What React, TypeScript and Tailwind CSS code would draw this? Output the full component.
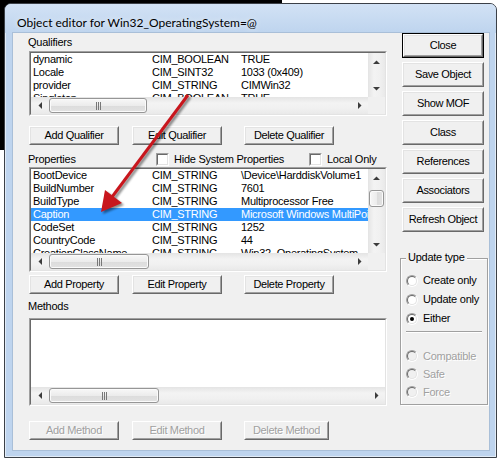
import React from 'react';

type Row = [string, string, string];

const qualifiers: Row[] = [
  ['dynamic', 'CIM_BOOLEAN', 'TRUE'],
  ['Locale', 'CIM_SINT32', '1033 (0x409)'],
  ['provider', 'CIM_STRING', 'CIMWin32'],
  ['Singleton', 'CIM_BOOLEAN', 'TRUE'],
];

const properties: Row[] = [
  ['BootDevice', 'CIM_STRING', '\\Device\\HarddiskVolume1'],
  ['BuildNumber', 'CIM_STRING', '7601'],
  ['BuildType', 'CIM_STRING', 'Multiprocessor Free'],
  ['Caption', 'CIM_STRING', 'Microsoft Windows MultiPoint Server 2011'],
  ['CodeSet', 'CIM_STRING', '1252'],
  ['CountryCode', 'CIM_STRING', '44'],
  ['CreationClassName', 'CIM_STRING', 'Win32_OperatingSystem'],
];

const Glyph = ({ dir }: { dir: 'left' | 'right' | 'up' | 'down' }) => {
  const pts = {
    left: '4,0 4,7 0.5,3.5',
    right: '0,0 0,7 3.5,3.5',
    up: '0,4 7,4 3.5,0.5',
    down: '0,0 7,0 3.5,3.5',
  }[dir];
  const vertical = dir === 'up' || dir === 'down';
  return (
    <svg width={vertical ? 7 : 4} height={vertical ? 4 : 7}>
      <polygon points={pts} fill="#3c3c3c" />
    </svg>
  );
};

const Grip = () => (
  <svg width="7" height="8">
    {[0, 2, 4].map((x) => (
      <rect key={x} x={x + 1} y="0" width="1" height="8" fill="#777" />
    ))}
  </svg>
);

const HScroll = ({ thumb }: { thumb: string }) => (
  <div className="flex h-[17px] flex-1 items-center bg-[linear-gradient(to_bottom,#e4e4e4,#f3f3f3_35%,#f0f0f0_70%,#e9e9e9)]">
    <div className="flex h-[17px] w-[17px] shrink-0 items-center justify-center">
      <Glyph dir="left" />
    </div>
    <div className="flex h-[17px] flex-1 items-center">
      <div
        className={`ml-[1px] flex h-[15px] items-center justify-center rounded-[3px] border border-[#969696] bg-[linear-gradient(to_bottom,#f7f7f7,#ececec_50%,#dcdcdc_51%,#e2e2e2)] shadow-[inset_0_0_0_1px_#fbfbfb] ${thumb}`}
      >
        <Grip />
      </div>
    </div>
    <div className="flex h-[17px] w-[17px] shrink-0 items-center justify-center">
      <Glyph dir="right" />
    </div>
  </div>
);

const VScroll = ({ withThumb }: { withThumb?: boolean }) => (
  <div className="flex w-[17px] shrink-0 flex-col items-center bg-[linear-gradient(to_right,#e4e4e4,#f3f3f3_35%,#f0f0f0_70%,#e9e9e9)]">
    <div className="flex h-[17px] w-[17px] shrink-0 items-center justify-center">
      <Glyph dir="up" />
    </div>
    <div className="flex flex-1 flex-col items-center">
      {withThumb && (
        <div className="mt-[4px] h-[17px] w-[15px] rounded-[3px] border border-[#969696] bg-[linear-gradient(to_right,#f7f7f7,#ececec_50%,#dcdcdc_51%,#e2e2e2)] shadow-[inset_0_0_0_1px_#fbfbfb]" />
      )}
    </div>
    <div className="flex h-[17px] w-[17px] shrink-0 items-center justify-center">
      <Glyph dir="down" />
    </div>
  </div>
);

const Rows = ({ rows, selected }: { rows: Row[]; selected?: number }) => (
  <div className="flex-1 overflow-hidden bg-white">
    {rows.map((r, i) => (
      <div
        key={r[0]}
        className={
          i === selected
            ? 'flex h-[13px] whitespace-nowrap bg-[#3399ff] text-white'
            : 'flex h-[13px] whitespace-nowrap text-black'
        }
      >
        <span className="w-[121px] shrink-0 pl-[2px]">{r[0]}</span>
        <span className="w-[89px] shrink-0">{r[1]}</span>
        <span>{r[2]}</span>
      </div>
    ))}
  </div>
);

const Sunken = ({ className, children }: { className: string; children: React.ReactNode }) => (
  <div className={`border border-t-[#a0a0a0] border-l-[#a0a0a0] border-r-white border-b-white ${className}`}>
    <div className="flex h-full w-full flex-col border border-t-[#696969] border-l-[#696969] border-r-[#e3e3e3] border-b-[#e3e3e3] bg-white">
      {children}
    </div>
  </div>
);

const Button = ({
  label,
  className,
  def,
  disabled,
}: {
  label: string;
  className: string;
  def?: boolean;
  disabled?: boolean;
}) => (
  <div className={`shrink-0 bg-[#f0f0f0] ${def ? 'border border-black' : ''} ${className}`}>
    <div className="flex h-full w-full border border-t-white border-l-white border-r-[#696969] border-b-[#696969]">
      <div
        className={
          disabled
            ? 'flex h-full w-full items-center justify-center whitespace-nowrap border border-t-[#f0f0f0] border-l-[#f0f0f0] border-r-[#a0a0a0] border-b-[#a0a0a0] tracking-[-0.35px] text-[#a0a0a0] [text-shadow:1px_1px_0_#fff]'
            : 'flex h-full w-full items-center justify-center whitespace-nowrap border border-t-[#e3e3e3] border-l-[#e3e3e3] border-r-[#a0a0a0] border-b-[#a0a0a0] tracking-[-0.35px] text-black'
        }
      >
        {label}
      </div>
    </div>
  </div>
);

const Checkbox = () => (
  <span className="inline-flex h-[13px] w-[13px] border border-t-[#a0a0a0] border-l-[#a0a0a0] border-r-white border-b-white">
    <span className="h-full w-full border border-t-[#696969] border-l-[#696969] border-r-[#e3e3e3] border-b-[#e3e3e3] bg-white" />
  </span>
);

const Radio = ({
  label,
  checked,
  disabled,
  className,
}: {
  label: string;
  checked?: boolean;
  disabled?: boolean;
  className: string;
}) => (
  <div className={`flex items-center ${className}`}>
    <span className="flex h-[12px] w-[12px] items-center justify-center rounded-full border border-t-[#a0a0a0] border-l-[#a0a0a0] border-r-white border-b-white">
      <span
        className={
          disabled
            ? 'flex h-[10px] w-[10px] items-center justify-center rounded-full border border-t-[#696969] border-l-[#696969] border-r-[#e3e3e3] border-b-[#e3e3e3] bg-[#f0f0f0]'
            : 'flex h-[10px] w-[10px] items-center justify-center rounded-full border border-t-[#696969] border-l-[#696969] border-r-[#e3e3e3] border-b-[#e3e3e3] bg-white'
        }
      >
        {checked && <span className="h-[4px] w-[4px] rounded-full bg-black" />}
      </span>
    </span>
    <span className={disabled ? 'ml-[5px] text-[#a0a0a0] [text-shadow:1px_1px_0_#fff]' : 'ml-[5px] text-black'}>
      {label}
    </span>
  </div>
);

export default function App() {
  return (
    <div className="relative h-[466px] w-[504px] overflow-hidden bg-white bg-[linear-gradient(#000,#000)] bg-[length:282px_150px] bg-no-repeat pl-[4px] pt-[3px] font-['Liberation_Sans',Arial,sans-serif] text-[11px] leading-[13px] tracking-[-0.25px]">
      <div className="flex h-[455px] w-[493px] flex-col rounded-t-[7px] border border-[#3b4047] bg-[#bed4ee] shadow-[inset_0_0_0_1px_rgba(255,255,255,0.55)]">
        <div className="flex h-[29px] shrink-0 items-center rounded-t-[6px] bg-[linear-gradient(#d2e2f5,#bed4ee)] pl-[12px] pt-[7px] font-['Lato',sans-serif] text-[12px] tracking-normal text-black [text-shadow:0_0_6px_rgba(255,255,255,0.9)]">
          Object editor for Win32_OperatingSystem=@
        </div>
        <div className="ml-[8px] flex h-[417px] w-[476px] shrink-0 bg-[#f0f0f0] shadow-[0_0_0_1px_#a9bfd8]">
          {/* left column */}
          <div className="ml-[16px] flex w-[358px] flex-col pt-[3px]">
            <div className="-ml-px h-[13px]">Qualifiers</div>
            <Sunken className="mt-[2px] h-[65px] w-[358px]">
              <div className="flex h-[44px]">
                <Rows rows={qualifiers} />
                <VScroll />
              </div>
              <div className="flex">
                <HScroll thumb="w-[98px]" />
                <div className="h-[17px] w-[17px] bg-[#f0f0f0]" />
              </div>
            </Sunken>
            <div className="mt-[10px] flex">
              <Button label="Add Qualifier" className="h-[19px] w-[90px]" />
              <Button label="Edit Qualifier" className="ml-[13px] h-[19px] w-[90px]" />
              <Button label="Delete Qualifier" className="ml-[22px] h-[19px] w-[90px]" />
            </div>
            <div className="mt-[7px] flex h-[14px] items-center">
              <div className="-ml-px w-[128px]">Properties</div>
              <div className="flex w-[153px] items-center">
                <Checkbox />
                <span className="ml-[5px]">Hide System Properties</span>
              </div>
              <div className="flex items-center">
                <Checkbox />
                <span className="ml-[5px]">Local Only</span>
              </div>
            </div>
            <Sunken className="mt-[1px] h-[105px] w-[358px]">
              <div className="flex h-[84px]">
                <Rows rows={properties} selected={3} />
                <VScroll withThumb />
              </div>
              <div className="flex">
                <HScroll thumb="w-[100px]" />
                <div className="h-[17px] w-[17px] bg-[#f0f0f0]" />
              </div>
            </Sunken>
            <div className="mt-[3px] flex">
              <Button label="Add Property" className="h-[19px] w-[90px]" />
              <Button label="Edit Property" className="ml-[13px] h-[19px] w-[90px]" />
              <Button label="Delete Property" className="ml-[22px] h-[19px] w-[90px]" />
            </div>
            <div className="-ml-px mt-[6px] h-[13px]">Methods</div>
            <Sunken className="mt-[5px] h-[88px] w-[358px]">
              <div className="h-[67px] bg-white" />
              <div className="flex">
                <HScroll thumb="w-[110px]" />
              </div>
            </Sunken>
            <div className="mt-[15px] flex">
              <Button label="Add Method" className="h-[19px] w-[90px]" disabled />
              <Button label="Edit Method" className="ml-[13px] h-[19px] w-[90px]" disabled />
              <Button label="Delete Method" className="ml-[22px] h-[19px] w-[85px]" disabled />
            </div>
          </div>

          {/* right column */}
          <div className="ml-[13px] flex w-[88px] flex-col">
            <div className="ml-[2px] flex w-[82px] flex-col gap-[4px]">
              <Button label="Close" className="h-[25px] w-[82px]" def />
              <Button label="Save Object" className="h-[25px] w-[82px]" />
              <Button label="Show MOF" className="h-[25px] w-[82px]" />
              <Button label="Class" className="h-[25px] w-[82px]" />
              <Button label="References" className="h-[25px] w-[82px]" />
              <Button label="Associators" className="h-[25px] w-[82px]" />
              <Button label="Refresh Object" className="h-[25px] w-[82px]" />
            </div>
            <div className="mt-[26px] flex w-[88px] flex-col border border-[#a0a0a0] px-[5px] pb-[3px] shadow-[1px_1px_0_#fff,inset_1px_1px_0_#fff]">
              <div className="-mt-[8px] w-fit bg-[#f0f0f0] px-[2px]">Update type</div>
              <Radio label="Create only" className="mt-[7px] h-[19px]" />
              <Radio label="Update only" className="h-[19px]" />
              <Radio label="Either" className="h-[19px]" checked />
              <div className="mt-[3px] h-[2px] border-t border-b border-t-[#a0a0a0] border-b-white" />
              <Radio label="Compatible" className="mt-[14px] h-[18px]" disabled />
              <Radio label="Safe" className="h-[18px]" disabled />
              <Radio label="Force" className="h-[18px]" disabled />
            </div>
          </div>
        </div>
      </div>

      <svg className="pointer-events-none absolute left-0 top-0" width="504" height="466">
        <defs>
          <filter id="sh" x="-20%" y="-20%" width="140%" height="140%">
            <feGaussianBlur stdDeviation="1.2" />
          </filter>
        </defs>
        <g transform="translate(2,2)" filter="url(#sh)" opacity="0.45">
          <line x1="188" y1="95" x2="112" y2="197" stroke="#000" strokeWidth="3" />
          <polygon points="101,212 105,190 122,203" fill="#000" />
        </g>
        <line x1="188" y1="95" x2="112" y2="197" stroke="#c8161d" strokeWidth="3" />
        <polygon points="101,212 105,190 122,203" fill="#c8161d" />
      </svg>
    </div>
  );
}
